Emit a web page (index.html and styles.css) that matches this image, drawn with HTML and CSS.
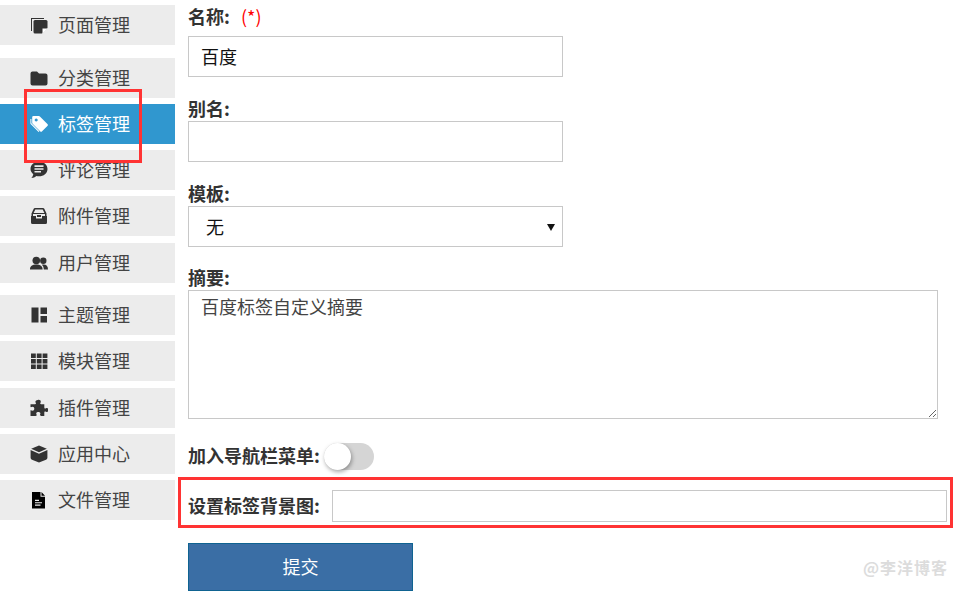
FILE: index.html
```html
<!DOCTYPE html>
<html lang="zh-CN">
<head>
<meta charset="utf-8">
<title>标签管理</title>
<link rel="stylesheet" href="styles.css">
</head>
<body>
<div class="page">
  <nav class="sidebar">
    <a class="item"><svg class="icon" viewBox="0 0 18 18"><path d="M1 2h13v1H2V15H1z"/><path d="M5 4H16A1.500 1.500 0 0 1 17.500 5.500V12L12 17.500H5A1.500 1.500 0 0 1 3.500 16V5.500A1.500 1.500 0 0 1 5 4z"/><path class="cut" d="M12.500 17.500V12.500H17.500z"/></svg><span>页面管理</span></a>
    <a class="item gap-13"><svg class="icon" viewBox="0 0 18 18"><path d="M2.500 2.500h4.500l2 2h6.500a2 2 0 0 1 2 2v8a2 2 0 0 1-2 2h-13a2 2 0 0 1-2-2v-10a2 2 0 0 1 2-2z"/></svg><span>分类管理</span></a>
    <a class="item active"><svg class="icon" viewBox="0 0 18 18"><path d="M3.500 1h5.300a1.500 1.500 0 0 1 1.100.4l7.500 7.500a1.400 1.400 0 0 1 0 2l-5.300 5.300a1.400 1.400 0 0 1-2 0L2.600 8.700a1.500 1.500 0 0 1-.4-1.100V2.300A1.300 1.300 0 0 1 3.500 1zM6.200 3.500a1.500 1.500 0 1 0 .01 0z" fill-rule="evenodd"/><path d="M.4 4h1v4.200l8 8-.8.800-8-8a1 1 0 0 1-.2-.7z"/></svg><span>标签管理</span></a>
    <a class="item"><svg class="icon" viewBox="0 0 18 18"><path d="M9 .5c4.700 0 8.500 3.300 8.500 7.400s-3.800 7.400-8.500 7.400c-1 0-1.800-.1-2.600-.3-1.300 1.100-3 1.900-5 2.100 1-1.200 1.700-2.500 1.900-3.800C1.600 11.500.5 9.800.5 7.900.5 3.800 4.300.5 9 .5zM4.500 4.300v1.600h9V4.300zM4.500 7.200v1.600h9V7.200zM4.500 10v1.600h6.500V10z" fill-rule="evenodd"/></svg><span>评论管理</span></a>
    <a class="item"><svg class="icon" viewBox="0 0 18 18"><path d="M5 1h8a1.500 1.500 0 0 1 1.300.8L16.500 6.500V9H15V7H3v2H1.500V6.500L3.700 1.800A1.500 1.500 0 0 1 5 1zM5.300 2.500 3.600 6h10.800l-1.700-3.500z" fill-rule="evenodd"/><path d="M1 9h5v2.500h6V9h5v6.500A1.500 1.500 0 0 1 15.500 17h-13A1.500 1.500 0 0 1 1 15.500zM7 8h4v2H7z"/></svg><span>附件管理</span></a>
    <a class="item gap-7"><svg class="icon" viewBox="0 0 18 18"><circle cx="6.300" cy="6.500" r="3.800"/><circle cx="13.300" cy="6.800" r="3.200"/><path d="M0 15.500c0-3.400 2.200-5 6.300-5s6.300 1.600 6.300 5zM13.800 15.500c0-2-.6-3.600-2-4.800 4-.8 6.200 1 6.200 4.800z"/></svg><span>用户管理</span></a>
    <a class="item gap-12"><svg class="icon" viewBox="0 0 18 18"><path d="M1.500 1.500h7v15h-7zM10.500 1.500h6.500v6.500h-6.500zM10.500 10h6.500v6.500h-6.500z"/></svg><span>主题管理</span></a>
    <a class="item"><svg class="icon" viewBox="0 0 18 18"><path d="M1 1.500h4.800v4.500H1zM6.800 1.500h4.800v4.500H6.800zM12.600 1.500H17.400v4.500h-4.800zM1 7h4.800v4.500H1zM6.800 7h4.800v4.500H6.800zM12.600 7H17.400v4.500h-4.800zM1 12.500h4.800v4.500H1zM6.800 12.500h4.800v4.500H6.800zM12.600 12.500H17.400v4.500h-4.800z"/></svg><span>模块管理</span></a>
    <a class="item gap-7"><svg class="icon" viewBox="0 0 18 18"><path d="M7.800 1c1.600-.5 3 .3 3 1.700 0 .9-.6 1.200-.6 1.900 0 .5.500.7 1.600.7h2.500v3c0 .9.300 1.300.9 1.300.6 0 1-.6 1.700-.6 1.100 0 1.600 1 1.600 2s-.5 2-1.600 2c-.7 0-1.100-.6-1.700-.6-.6 0-.9.400-.9 1.300V17h-3.300c-.8 0-1.100-.4-1.100-.9 0-.6.500-1 .5-1.600 0-1-1-1.500-2.100-1.500s-2.100.5-2.100 1.500c0 .6.500 1 .5 1.600 0 .5-.3.900-1.100.9H.5v-5.700c.8-.2 1.200.4 2 .4 1.100 0 1.800-.9 1.800-2S3.600 7.700 2.500 7.700c-.8 0-1.200.6-2 .4V5.300h3.900c1.100 0 1.600-.2 1.600-.7 0-.7-.6-1-.6-1.900 0-.8.600-1.400 2.400-1.700z"/></svg><span>插件管理</span></a>
    <a class="item"><svg class="icon" viewBox="0 0 18 18"><path d="M9 .5 16.800 3.700 9 7.300 1.200 3.700z"/><path d="M.6 5 9 8.800 17.400 5V12.700A2.200 2.200 0 0 1 16 14.700L9 17.500 2 14.700A2.200 2.200 0 0 1 .6 12.700z"/></svg><span>应用中心</span></a>
    <a class="item"><svg class="icon icon-file" viewBox="0 0 18 18"><path d="M2 1h8.500v4.800H15V17.500H2zM11.500 1 15 4.800h-3.500zM5 8.800h4v1.100H5zM5 11.200h7v1.100H5zM5 13.600h5.500v1.100H5z" fill-rule="evenodd"/></svg><span>文件管理</span></a>
  </nav>
  <form class="form">
    <div class="field">
      <label class="label first">名称: <em class="req">(*)</em></label>
      <input class="input" type="text" value="百度">
    </div>
    <div class="field">
      <label class="label">别名:</label>
      <input class="input" type="text">
    </div>
    <div class="field">
      <label class="label">模板:</label>
      <div class="select-wrap">
        <select class="input select"><option>无</option></select>
      </div>
    </div>
    <div class="field">
      <label class="label tight">摘要:</label>
      <textarea class="textarea">百度标签自定义摘要</textarea>
    </div>
    <div class="switch-row">
      <span class="inline-label">加入导航栏菜单:</span>
      <span class="switch"><span class="knob"></span></span>
    </div>
    <div class="bg-row">
      <span class="inline-label">设置标签背景图:</span>
      <input class="bg-input" type="text">
    </div>
    <button class="submit" type="button">提交</button>
  </form>
  <div class="mark-side"></div>
  <div class="watermark">@李洋博客</div>
</div>
</body>
</html>
```
FILE: styles.css
```css
* { box-sizing: border-box; }
html, body { margin: 0; height: 100%; overflow: hidden; background: #fff; }
body, input, select, textarea, button {
  font-family: "Noto Sans CJK SC", "Liberation Sans", sans-serif;
}
.page { position: relative; display: flex; height: 596px; color: #333; }

.sidebar { width: 175px; flex: none; padding-top: 5px; display: flex; flex-direction: column; gap: 6px; }
.item {
  height: 40px; background: #ececec; color: #444;
  display: flex; align-items: center; padding-left: 30px;
  font-size: 18px; line-height: 1;
}
.item span { padding-bottom: 2px; }
.item.gap-7 { margin-top: 1px; }
.item.gap-12 { margin-top: 6px; }
.item.gap-13 { margin-top: 7px; }
.item.active { background: #3097cf; color: #fff; }
.icon { width: 18px; height: 18px; margin-right: 10px; fill: #333; flex: none; }
.active .icon { fill: #fff; }
.icon-file { fill: #000; }
.cut { fill: #fff; }

.form { margin-left: 13px; width: 750px; display: flex; flex-direction: column; }
.field { display: flex; flex-direction: column; }
.label { display: block; height: 24px; font-size: 18px; font-weight: 700; line-height: 22px; color: #333; margin-top: 20px; }
.label.first { margin-top: 6px; height: 30px; line-height: 20px; }
.label.tight { margin-top: 19px; line-height: 22px; }
.req { font-style: normal; font-weight: 400; color: #f00; margin-left: 7px; }
.input {
  display: block; width: 375px; height: 41px; border: 1px solid #c8c8c8; background: #fff;
  padding: 0 12px 2px; font-size: 18px; color: #111; border-radius: 0; outline: 0;
}
.select-wrap { position: relative; width: 375px; }
.select { appearance: none; padding-left: 17px; }
.select-wrap::after {
  content: ""; position: absolute; right: 8px; top: 18px;
  border-left: 4px solid transparent; border-right: 4px solid transparent; border-top: 7px solid #111;
}
.textarea {
  display: block; width: 750px; height: 129px; border: 1px solid #c8c8c8; padding: 2px 13px 4px 13px;
  font-size: 18px; line-height: 26px; color: #444; border-radius: 0; outline: 0;
  text-indent: -1px;
}
.switch-row { display: flex; align-items: center; height: 27px; margin-top: 24px; }
.inline-label { font-size: 18px; font-weight: 700; color: #333; line-height: 27px; flex: none; padding-bottom: 2px; }
.switch { position: relative; display: block; width: 50px; height: 27px; margin-left: 4px; border-radius: 14px; background: #d5d5d5; }
.knob { position: absolute; left: 0; top: 0; width: 27px; height: 27px; border-radius: 50%; background: #fff; box-shadow: 1px 2px 4px rgba(0,0,0,.35); }
.bg-row {
  display: flex; align-items: center; width: 775px; height: 51px; margin: 7px 0 0 -10px;
  border: 3px solid #f33; padding: 7px 3px 0 7px;
}
.bg-input { width: 615px; height: 32px; margin-left: auto; border: 1px solid #c8c8c8; background: #fff; outline: 0; border-radius: 0; }
.submit {
  width: 225px; height: 48px; margin-top: 15px; background: #3a6ea5; border: 1px solid #0f6391;
  color: #fff; font-size: 18px; padding: 0 0 2px;
}
.mark-side { position: absolute; left: 24px; top: 89px; width: 118px; height: 74px; border: 3px solid #f33; }
.watermark { position: absolute; left: 863px; top: 555px; font-size: 16px; font-weight: 700; letter-spacing: 1px; color: #dcdcdc; line-height: 24px; white-space: nowrap; }
```
